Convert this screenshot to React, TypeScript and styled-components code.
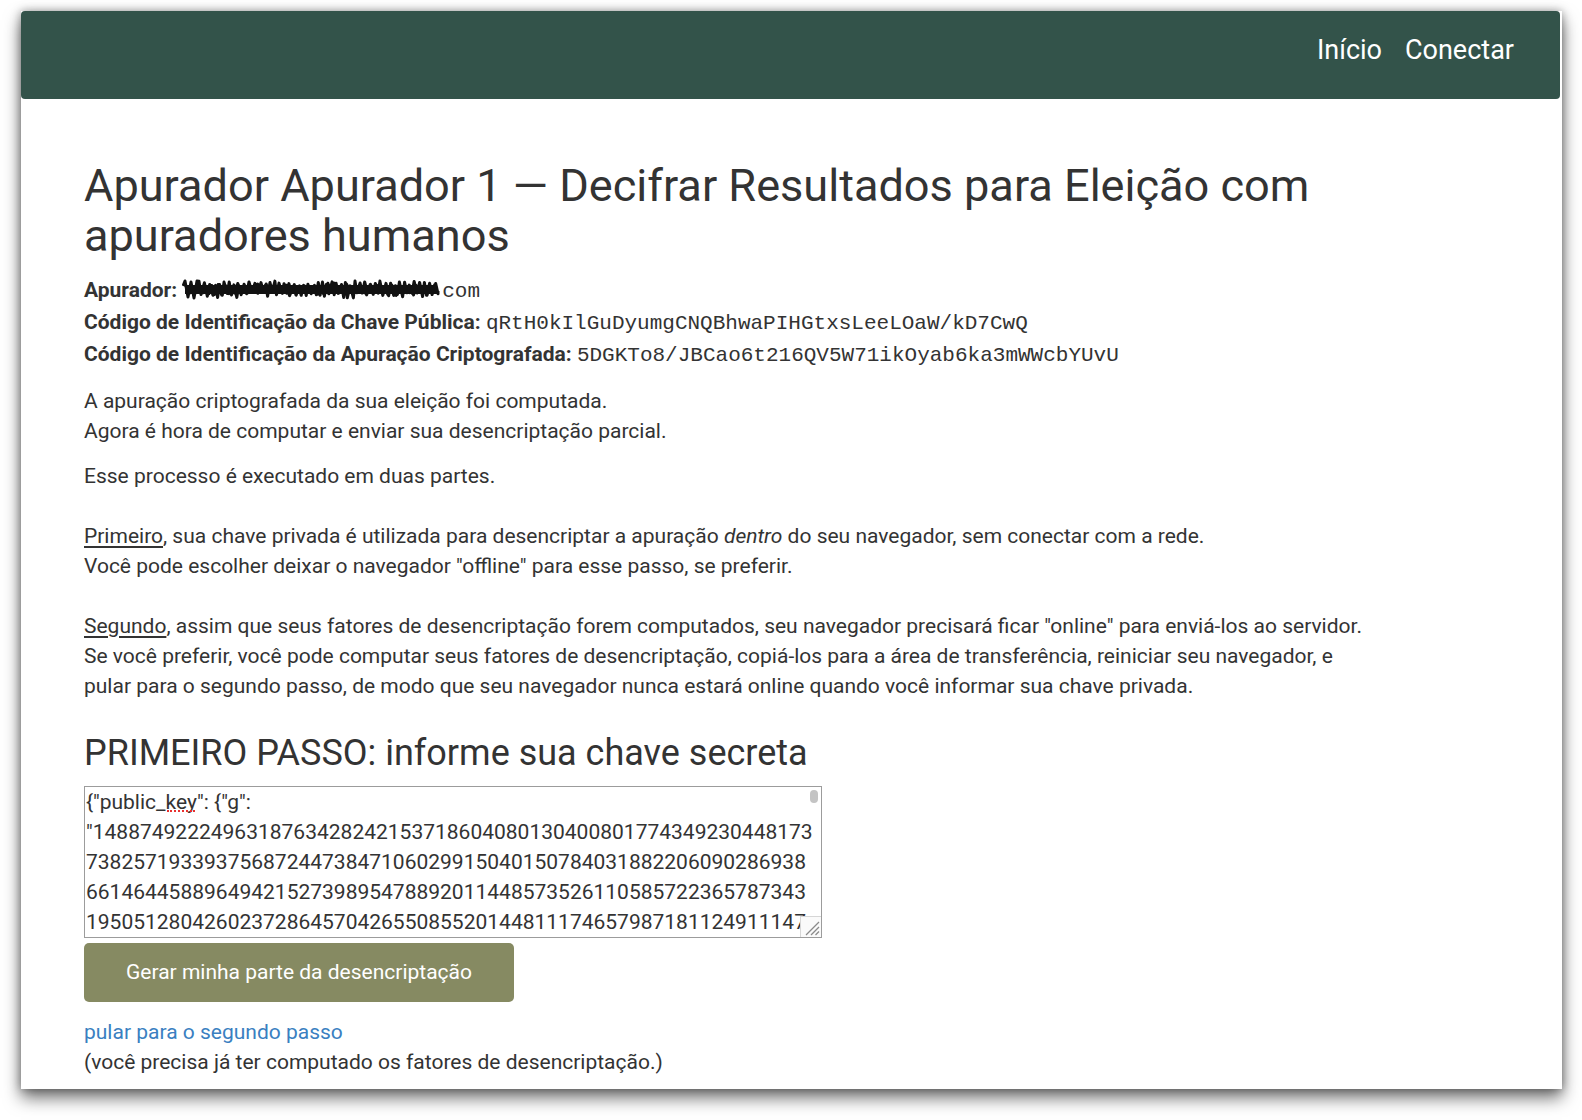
import React from "react";
import styled, { createGlobalStyle } from "styled-components";

const GlobalStyle = createGlobalStyle`
  html, body {
    margin: 0;
    padding: 0;
    background: #ffffff;
  }
  body {
    font-family: Roboto, "Liberation Sans", Arial, sans-serif;
    color: #333333;
  }
  * { box-sizing: border-box; }
`;

/* ---------- deterministic data ---------- */
function makeDigits(seed: number, n: number): string {
  let x = seed;
  let s = "";
  for (let i = 0; i < n; i++) {
    x = (x * 1103515245 + 12345) % 2147483648;
    s += String(Math.floor(x / 65536) % 10);
  }
  return s;
}

const gDigits =
  "1488749222496318763428242153718604080130400801774349230448173" +
  "7382571933937568724473847106029915040150784031882206090286938" +
  "6614644588964942152739895478892011448573526110585722365787343" +
  "1950512804260237286457042655085520144811174657987181124911147" +
  makeDigits(7, 370);

const secretKey =
  `{"public_key": {"g": "${gDigits}", "p": "${makeDigits(11, 617)}", ` +
  `"q": "${makeDigits(23, 77)}", "y": "${makeDigits(31, 616)}"}, ` +
  `"x": "${makeDigits(47, 1100)}"}`;

function makeScribble(): string {
  let seed = 5;
  const rnd = () => {
    seed = (seed * 16807) % 2147483647;
    return (seed % 1000) / 1000;
  };
  const parts: string[] = [`M1 7 L3 2 L6 18 L9 3 L12 19 L15 2`];
  let x = 17;
  let up = true;
  while (x < 257) {
    const y = up ? 2 + rnd() * 5 : 13 + rnd() * 6;
    parts.push(`L${x.toFixed(1)} ${y.toFixed(1)}`);
    x += 1.6 + rnd() * 1.8;
    up = !up;
  }
  x = 256;
  up = false;
  parts.push(`M${x} 12`);
  while (x > 2) {
    const y = up ? 4 + rnd() * 5 : 11 + rnd() * 6;
    parts.push(`L${x.toFixed(1)} ${y.toFixed(1)}`);
    x -= 2 + rnd() * 2.5;
    up = !up;
  }
  return parts.join(" ");
}
const scribblePath = makeScribble();

/* ---------- styled parts ---------- */
const Stage = styled.div`
  width: 1582px;
  height: 1120px;
  padding: 11px 0 0 21px;
  overflow: hidden;
  background: #ffffff;
`;

const Window = styled.div`
  width: 1541px;
  height: 1078px;
  background: #ffffff;
  overflow: hidden;
  box-shadow: 0 9px 16px rgba(0, 0, 0, 0.55), 0 0 9px rgba(0, 0, 0, 0.35);
`;

const NavBar = styled.nav`
  height: 88px;
  margin-right: 2px;
  background: #33534a;
  border-radius: 4px;
  display: flex;
  justify-content: flex-end;
  align-items: flex-start;
  gap: 23px;
  padding: 24px 46px 0 0;
`;

const NavLink = styled.a`
  color: #ffffff;
  font-size: 27px;
  line-height: 30px;
  text-decoration: none;
  cursor: pointer;
`;

const Content = styled.main`
  width: 1359px;
  padding: 62px 0 0 63px;
  font-size: 21px;
  line-height: 30px;
`;

const Title = styled.h1`
  margin: 0 0 13px;
  font-size: 45.1px;
  line-height: 50px;
  font-weight: 400;
  color: #333333;
`;

const InfoRow = styled.div<{ $lead?: boolean }>`
  line-height: ${(p) => (p.$lead ? "29.5px" : "31.5px")};
  padding-top: ${(p) => (p.$lead ? "2px" : "0")};
  white-space: nowrap;
`;

const Label = styled.b`
  font-weight: 700;
`;

const Code = styled.code`
  font-family: "Liberation Mono", "Courier New", monospace;
  font-size: 21px;
`;

const Scribble = styled.svg`
  width: 260px;
  height: 21px;
  vertical-align: -3px;
  margin-left: 5px;
`;

const Para = styled.p<{ $spaced?: boolean; $first?: boolean }>`
  margin: ${(p) => (p.$spaced ? "30px" : p.$first ? "14px" : "0")} 0 15px;
`;

const Under = styled.span`
  text-decoration: underline;
  text-underline-offset: 3px;
`;

const StepTitle = styled.h2`
  margin: 32px 0 13px;
  font-size: 36px;
  line-height: 40px;
  font-weight: 400;
  color: #333333;
`;

const KeyBox = styled.div`
  position: relative;
  width: 738px;
  height: 152px;
`;

const KeyArea = styled.textarea`
  display: block;
  width: 738px;
  height: 152px;
  margin: 0;
  padding: 0 8px 0 1px;
  border: 1px solid #9c9c9c;
  border-radius: 0;
  font-family: Roboto, "Liberation Sans", Arial, sans-serif;
  font-size: 21px;
  line-height: 30px;
  color: #333333;
  background: #ffffff;
  outline: none;
  resize: none;
  overflow-y: scroll;
  scrollbar-width: none;

  &::-webkit-scrollbar {
    display: none;
  }
`;

const ScrollThumb = styled.span`
  position: absolute;
  top: 4px;
  right: 4px;
  width: 8px;
  height: 13px;
  border-radius: 4px;
  background: #c4c4c4;
  pointer-events: none;
`;

const ResizeGrip = styled.svg`
  position: absolute;
  right: 1px;
  bottom: 1px;
  width: 21px;
  height: 21px;
  pointer-events: none;
`;

const SpellMark = styled.span`
  position: absolute;
  left: 83px;
  top: 24px;
  width: 28px;
  height: 0;
  border-bottom: 2px dotted #e8312f;
  pointer-events: none;
`;

const PrimaryButton = styled.button`
  display: block;
  width: 430px;
  margin-top: 5px;
  padding: 14px 0 15px;
  border: none;
  border-radius: 5px;
  background: #868a62;
  color: #ffffff;
  font-family: Roboto, "Liberation Sans", Arial, sans-serif;
  font-size: 21px;
  line-height: 30px;
  text-align: center;
  cursor: pointer;
`;

const SkipLink = styled.a`
  display: block;
  margin-top: 15px;
  color: #3a7fc1;
  text-decoration: none;
  cursor: pointer;
`;

const Note = styled.div``;

export default function App() {
  return (
    <>
      <GlobalStyle />
      <Stage>
        <Window>
          <NavBar>
            <NavLink>Início</NavLink>
            <NavLink>Conectar</NavLink>
          </NavBar>
          <Content>
            <Title>
              Apurador Apurador 1 — Decifrar Resultados para Eleição com apuradores humanos
            </Title>

            <InfoRow $lead>
              <Label>Apurador:</Label>
              <Scribble viewBox="0 0 260 21" aria-hidden="true">
                <path
                  d={scribblePath}
                  fill="none"
                  stroke="#111"
                  strokeWidth="3"
                  strokeLinejoin="round"
                />
                <rect x="3" y="6" width="252" height="9" fill="#111" />
              </Scribble>
              <Code>com</Code>
            </InfoRow>
            <InfoRow>
              <Label>Código de Identificação da Chave Pública:</Label>{" "}
              <Code>qRtH0kIlGuDyumgCNQBhwaPIHGtxsLeeLOaW/kD7CwQ</Code>
            </InfoRow>
            <InfoRow>
              <Label>Código de Identificação da Apuração Criptografada:</Label>{" "}
              <Code>5DGKTo8/JBCao6t216QV5W71ikOyab6ka3mWWcbYUvU</Code>
            </InfoRow>

            <Para $first>
              A apuração criptografada da sua eleição foi computada.
              <br />
              Agora é hora de computar e enviar sua desencriptação parcial.
            </Para>
            <Para>Esse processo é executado em duas partes.</Para>
            <Para $spaced>
              <Under>Primeiro</Under>, sua chave privada é utilizada para desencriptar a apuração{" "}
              <em>dentro</em> do seu navegador, sem conectar com a rede.
              <br />
              Você pode escolher deixar o navegador "offline" para esse passo, se preferir.
            </Para>
            <Para $spaced>
              <Under>Segundo</Under>, assim que seus fatores de desencriptação forem computados, seu
              navegador precisará ficar "online" para enviá-los ao servidor.
              <br />
              Se você preferir, você pode computar seus fatores de desencriptação, copiá-los para a
              área de transferência, reiniciar seu navegador, e pular para o segundo passo, de modo
              que seu navegador nunca estará online quando você informar sua chave privada.
            </Para>

            <StepTitle>PRIMEIRO PASSO: informe sua chave secreta</StepTitle>
            <KeyBox>
              <KeyArea defaultValue={secretKey} spellCheck={false} />
              <SpellMark />
              <ScrollThumb />
              <ResizeGrip viewBox="0 0 21 21" aria-hidden="true">
                <rect x="0.5" y="0.5" width="21" height="21" fill="#fafafa" stroke="#d6d6d6" />
                <line x1="6" y1="19" x2="19" y2="6" stroke="#8a8a8a" strokeWidth="1.2" />
                <line x1="11" y1="19" x2="19" y2="11" stroke="#8a8a8a" strokeWidth="1.2" />
                <line x1="15.5" y1="19" x2="19" y2="15.5" stroke="#8a8a8a" strokeWidth="1.2" />
              </ResizeGrip>
            </KeyBox>
            <PrimaryButton type="button">Gerar minha parte da desencriptação</PrimaryButton>
            <SkipLink>pular para o segundo passo</SkipLink>
            <Note>(você precisa já ter computado os fatores de desencriptação.)</Note>
          </Content>
        </Window>
      </Stage>
    </>
  );
}
